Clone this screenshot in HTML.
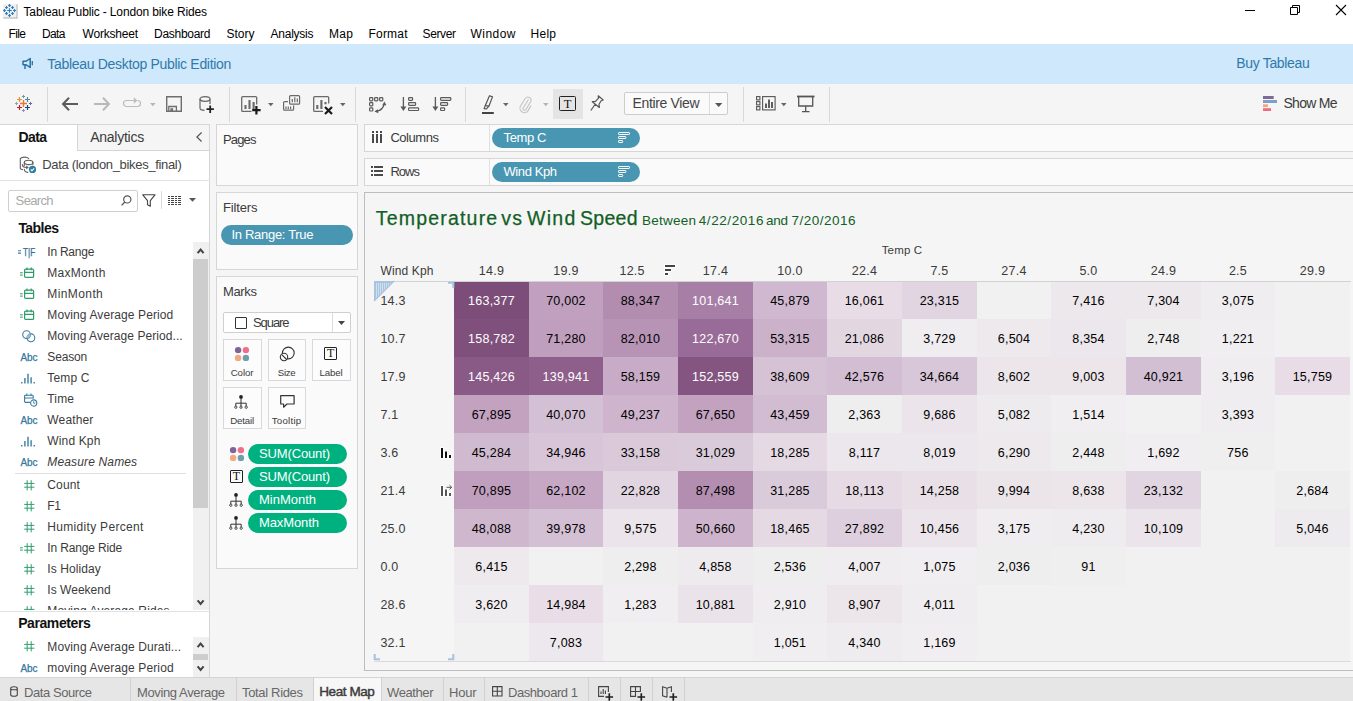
<!DOCTYPE html>
<html><head><meta charset="utf-8"><title>Tableau Public - London bike Rides</title>
<style>
html,body{margin:0;padding:0;}
body{width:1353px;height:701px;position:relative;overflow:hidden;background:#f5f5f5;font-family:"Liberation Sans",sans-serif;}
.b{position:absolute;box-sizing:border-box;}
.t{position:absolute;height:20px;line-height:20px;white-space:nowrap;}
svg{overflow:visible;}
.ttl{-webkit-text-stroke:0.25px currentColor;}
.sb{-webkit-text-stroke:0.25px currentColor;}
.sb2{-webkit-text-stroke:0.45px currentColor;}
</style></head><body>
<div class="b" style="left:0px;top:0px;width:1353px;height:44px;background:#fff;"></div>
<svg class="b" style="left:3px;top:4px;" width="15" height="15" viewBox="0 0 15 15"><rect x="0" y="0" width="13.5" height="13.5" fill="#f0f0f0"/><path d="M14 0.3v14M0.3 14h14" stroke="#adadad" stroke-width="1" fill="none"/><path d="M6.5 4.2v4.6M4.2 6.5h4.6" stroke="#2e7fb8" stroke-width="1.1" fill="none"/><path d="M6.5 0.1v2.8M5.1 1.5h2.8 M6.5 10.1v2.8M5.1 11.5h2.8 M1.5 5.1v2.8M0.1 6.5h2.8 M11.5 5.1v2.8M10.1 6.5h2.8 M3.5 2.1v2.8M2.1 3.5h2.8 M9.5 2.1v2.8M8.1 3.5h2.8 M3.5 8.1v2.8M2.1 9.5h2.8 M9.5 8.1v2.8M8.1 9.5h2.8" stroke="#2e7fb8" stroke-width="1.2" fill="none"/></svg>
<div class="t " style="top:2px;height:20px;line-height:20px;font-size:12px;color:#000;letter-spacing:-0.140px;left:23.50px;">Tableau Public - London bike Rides</div>
<svg class="b" style="left:1244px;top:4px;" width="110" height="14" viewBox="0 0 110 14"><g stroke="#000" stroke-width="1" fill="none"><path d="M1 6.5h10"/>
<path d="M46.5 3.5h7v7h-7zM48.5 3.5v-2h7v7h-2"/>
<path d="M92 1l10 10M102 1l-10 10" stroke-width="1.1"/></g></svg>
<div class="t " style="top:24px;height:20px;line-height:20px;font-size:12px;color:#000;letter-spacing:-0.611px;left:8.50px;">File</div>
<div class="t " style="top:24px;height:20px;line-height:20px;font-size:12px;color:#000;letter-spacing:-0.616px;left:42.00px;">Data</div>
<div class="t " style="top:24px;height:20px;line-height:20px;font-size:12px;color:#000;letter-spacing:-0.204px;left:82.50px;">Worksheet</div>
<div class="t " style="top:24px;height:20px;line-height:20px;font-size:12px;color:#000;letter-spacing:-0.275px;left:154.00px;">Dashboard</div>
<div class="t " style="top:24px;height:20px;line-height:20px;font-size:12px;color:#000;letter-spacing:-0.002px;left:226.50px;">Story</div>
<div class="t " style="top:24px;height:20px;line-height:20px;font-size:12px;color:#000;letter-spacing:-0.240px;left:270.50px;">Analysis</div>
<div class="t " style="top:24px;height:20px;line-height:20px;font-size:12px;color:#000;letter-spacing:0.328px;left:329.00px;">Map</div>
<div class="t " style="top:24px;height:20px;line-height:20px;font-size:12px;color:#000;letter-spacing:0.199px;left:368.50px;">Format</div>
<div class="t " style="top:24px;height:20px;line-height:20px;font-size:12px;color:#000;letter-spacing:-0.369px;left:422.50px;">Server</div>
<div class="t " style="top:24px;height:20px;line-height:20px;font-size:12px;color:#000;letter-spacing:0.464px;left:470.50px;">Window</div>
<div class="t " style="top:24px;height:20px;line-height:20px;font-size:12px;color:#000;letter-spacing:0.274px;left:530.50px;">Help</div>
<div class="b" style="left:0px;top:44px;width:1353px;height:40px;background:#cfe8fc;"></div>
<svg class="b" style="left:22px;top:57px;" width="13" height="13" viewBox="0 0 13 13"><g fill="none" stroke="#2a72a4" stroke-width="1.5" stroke-linejoin="round"><path d="M1 4.2h3.2l4-2.7v9l-4-2.7H1z"/><path d="M3 8v4" /><path d="M10.3 4v4.2" stroke-width="1.3"/></g></svg>
<div class="t " style="top:53px;height:22px;line-height:22px;font-size:14px;color:#2f7aa9;letter-spacing:-0.310px;left:47.30px;">Tableau Desktop Public Edition</div>
<div class="t " style="top:52px;height:22px;line-height:22px;font-size:14px;color:#2f7aa9;letter-spacing:-0.330px;left:1236.30px;">Buy Tableau</div>
<div class="b" style="left:0px;top:84px;width:1353px;height:40px;background:#f5f5f5;"></div>
<div class="b" style="left:47px;top:87px;width:1px;height:35px;background:#d9d9d9;"></div>
<div class="b" style="left:229px;top:87px;width:1px;height:35px;background:#d9d9d9;"></div>
<div class="b" style="left:355px;top:87px;width:1px;height:35px;background:#d9d9d9;"></div>
<div class="b" style="left:465px;top:87px;width:1px;height:35px;background:#d9d9d9;"></div>
<div class="b" style="left:743px;top:87px;width:1px;height:35px;background:#d9d9d9;"></div>
<div class="b" style="left:829px;top:87px;width:1px;height:35px;background:#d9d9d9;"></div>
<svg class="b" style="left:15px;top:95px;" width="17" height="17" viewBox="0 0 17 17"><path d="M8.5 5v7M5 8.5h7" stroke="#e8762c" stroke-width="1.4"/><path d="M4.5 2v5M2 4.5h5" stroke="#eb912c" stroke-width="1.2"/><path d="M12.5 2v5M10 4.5h5" stroke="#59879b" stroke-width="1.2"/><path d="M4.5 10v5M2 12.5h5" stroke="#c72035" stroke-width="1.2"/><path d="M12.5 10v5M10 12.5h5" stroke="#1f447e" stroke-width="1.2"/><path d="M8.5 -0.1v3.2M6.9 1.5h3.2" stroke="#6a9aad" stroke-width="1"/><path d="M8.5 13.9v3.2M6.9 15.5h3.2" stroke="#8a8fbd" stroke-width="1"/><path d="M1.5 6.9v3.2M-0.1 8.5h3.2" stroke="#7aa9b8" stroke-width="1"/><path d="M15.5 6.9v3.2M13.9 8.5h3.2" stroke="#6a6a9e" stroke-width="1"/></svg>
<svg class="b" style="left:62px;top:97px;" width="16" height="14" viewBox="0 0 16 14"><path d="M7 0.8L1 7l6 6.2M1.2 7H16" fill="none" stroke="#5c5c5c" stroke-width="2"/></svg>
<svg class="b" style="left:94px;top:97px;" width="16" height="14" viewBox="0 0 16 14"><path d="M9 0.8L15 7l-6 6.2M14.8 7H0" fill="none" stroke="#b9b9b9" stroke-width="2"/></svg>
<svg class="b" style="left:123px;top:97px;" width="18" height="10" viewBox="0 0 18 10"><path d="M14.5 3.5a3 3 0 0 1 0 6H3.5a3 3 0 0 1 0-6H11" fill="none" stroke="#bdbdbd" stroke-width="1.2"/><path d="M10.8 0.3l3.6 3.2-3.6 3.2z" fill="#bdbdbd"/></svg>
<svg class="b" style="left:149.6px;top:102.9px;" width="5.6" height="3.2" viewBox="0 0 5.6 3.2"><path d="M0 0h5.6L2.8 3.2z" fill="#b5b5b5"/></svg>
<svg class="b" style="left:166px;top:96px;" width="16" height="16" viewBox="0 0 16 16"><path d="M0.7 0.7h14.6v14.6H0.7z" fill="none" stroke="#6e6e6e" stroke-width="1.4"/><path d="M2.8 15V10.5h7.6V15" fill="none" stroke="#6e6e6e" stroke-width="1.3"/><rect x="4.4" y="12.2" width="2.7" height="3" fill="#6e6e6e"/></svg>
<svg class="b" style="left:198.5px;top:96.3px;" width="16" height="18" viewBox="0 0 16 18"><g fill="none" stroke="#666" stroke-width="1.2"><ellipse cx="6" cy="3" rx="5" ry="2.3"/><path d="M1 3v9c0 1.2 2 2.3 4.6 2.3M11 3v5"/></g><path d="M11.2 9.5v7.4M7.5 13.2h7.4" stroke="#222" stroke-width="1.8"/></svg>
<svg class="b" style="left:240.5px;top:96px;" width="20" height="19" viewBox="0 0 20 19"><path d="M15.7 8.5V1.7a1 1 0 0 0-1-1H1.7a1 1 0 0 0-1 1v12.7a1 1 0 0 0 1 1H10.5" fill="none" stroke="#6a6a6a" stroke-width="1.3"/><path d="M4.5 13V9M8.5 13V4M12.6 13V6" stroke="#6a6a6a" stroke-width="2.1"/><path d="M15.4 10v8.4M11.2 14.2h8.4" stroke="#1a1a1a" stroke-width="2.2"/></svg>
<svg class="b" style="left:267.6px;top:102.9px;" width="5.6" height="3.2" viewBox="0 0 5.6 3.2"><path d="M0 0h5.6L2.8 3.2z" fill="#666"/></svg>
<svg class="b" style="left:283px;top:95px;" width="18" height="17" viewBox="0 0 18 17"><g fill="none" stroke="#6a6a6a" stroke-width="1.2"><rect x="6.6" y="0.6" width="10" height="8.6" rx="1"/><path d="M5 6.6H1.6a1 1 0 0 0-1 1v6.6a1 1 0 0 0 1 1h8a1 1 0 0 0 1-1V10.6"/></g><path d="M9.3 7.3V4M11.8 7.3V2.3M14.3 7.3V3.6M3 14v-2.6M5.3 14v-2.6M7.6 14v-2.6" stroke="#6a6a6a" stroke-width="1.2"/></svg>
<svg class="b" style="left:312.6px;top:96px;" width="20" height="19" viewBox="0 0 20 19"><path d="M15.7 7.5V1.7a1 1 0 0 0-1-1H1.7a1 1 0 0 0-1 1v12.7a1 1 0 0 0 1 1H10" fill="none" stroke="#6a6a6a" stroke-width="1.3"/><path d="M4.3 13V9M8.4 13V4M12.5 8.3V6" stroke="#6a6a6a" stroke-width="2.1"/><path d="M12 11l7 7M19 11l-7 7" stroke="#1a1a1a" stroke-width="2.2"/></svg>
<svg class="b" style="left:339.7px;top:102.9px;" width="5.6" height="3.2" viewBox="0 0 5.6 3.2"><path d="M0 0h5.6L2.8 3.2z" fill="#666"/></svg>
<svg class="b" style="left:369px;top:97px;" width="17" height="16" viewBox="0 0 17 16"><g fill="none" stroke="#5a5a5a" stroke-width="1.2"><rect x="0.6" y="0.6" width="3.2" height="3.2" rx="0.8"/><rect x="5.6" y="0.6" width="3.2" height="3.2" rx="0.8"/><rect x="10.6" y="0.6" width="3.2" height="3.2" rx="0.8"/><rect x="0.6" y="5.7" width="3.2" height="3.2" rx="0.8"/><rect x="0.6" y="10.8" width="3.2" height="3.2" rx="0.8"/><path d="M15 7.5c-0.8 3.6-3.6 6-7.4 6.8" stroke-width="1.3"/></g><path d="M15.4 4.6l2 3.6h-4.2zM5.4 14.6l3.4-2.3 0.6 4z" fill="#5a5a5a"/></svg>
<svg class="b" style="left:400px;top:97px;" width="20" height="15" viewBox="0 0 20 15"><path d="M3.4 0v11" stroke="#5a5a5a" stroke-width="1.3" fill="none"/><path d="M0.4 9.6h6L3.4 14z" fill="#5a5a5a"/><g fill="none" stroke="#5a5a5a" stroke-width="1.2"><rect x="8.6" y="0.6" width="4" height="2.7" rx="0.8"/><rect x="8.6" y="5.7" width="7" height="2.7" rx="0.8"/><rect x="8.6" y="10.8" width="10" height="2.7" rx="0.8"/></g></svg>
<svg class="b" style="left:432px;top:97px;" width="20" height="15" viewBox="0 0 20 15"><path d="M3.4 0v11" stroke="#5a5a5a" stroke-width="1.3" fill="none"/><path d="M0.4 9.6h6L3.4 14z" fill="#5a5a5a"/><g fill="none" stroke="#5a5a5a" stroke-width="1.2"><rect x="8.6" y="0.6" width="10.2" height="2.7" rx="0.8"/><rect x="8.6" y="5.7" width="7" height="2.7" rx="0.8"/><rect x="8.6" y="10.8" width="4" height="2.7" rx="0.8"/></g></svg>
<svg class="b" style="left:482px;top:95px;" width="12" height="19" viewBox="0 0 12 19"><g fill="none" stroke="#555" stroke-width="1.2" stroke-linejoin="round"><path d="M7.5 0.7l3 1.2-3.6 9.3-3.6-0.6z"/><path d="M3.3 10.6l-1.2 3 2.4 0.2 2.4-2.6"/></g><path d="M0 18h11.8" stroke="#444" stroke-width="2"/></svg>
<svg class="b" style="left:502.5px;top:102.9px;" width="5.6" height="3.2" viewBox="0 0 5.6 3.2"><path d="M0 0h5.6L2.8 3.2z" fill="#666"/></svg>
<svg class="b" style="left:519px;top:95px;" width="13" height="19" viewBox="0 0 13 19"><path d="M9.5 4.5L4 13.2a1.6 1.6 0 0 0 2.7 1.6L11.5 7A3.2 3.2 0 0 0 6 3.7L1.6 11a4.4 4.4 0 0 0 7.5 4.6l3-5" fill="none" stroke="#c6c6c6" stroke-width="1.2"/></svg>
<svg class="b" style="left:542.7px;top:102.9px;" width="5.6" height="3.2" viewBox="0 0 5.6 3.2"><path d="M0 0h5.6L2.8 3.2z" fill="#b5b5b5"/></svg>
<div class="b" style="left:553px;top:88.5px;width:30px;height:30px;background:#e4e4e4;"></div>
<div class="b" style="left:559px;top:96px;width:17px;height:15px;border:1px solid #222;border-width:1.4px;border-radius:1.5px;"></div>
<div class="t" style="left:559px;top:93.5px;width:17px;height:20px;line-height:20px;text-align:center;font-family:'Liberation Serif',serif;font-size:12.5px;color:#111;">T</div>
<svg class="b" style="left:590px;top:95px;" width="14" height="17" viewBox="0 0 14 17"><path d="M8.2 0.8l5 4.2-2 0.7-2.2 3.6 0.3 3.2-7-5.8 3.2-0.4 3-3.2zM5 9.5L0.8 15.5" fill="none" stroke="#555" stroke-width="1.2" stroke-linejoin="round"/></svg>
<div class="b" style="left:624px;top:92px;width:104px;height:23px;background:#fafafa;border:1px solid #cdcdcd;border-radius:2px;"></div>
<div class="b" style="left:709px;top:93px;width:1px;height:21px;background:#dcdcdc;"></div>
<div class="t " style="top:92px;height:22px;line-height:22px;font-size:14px;color:#444;letter-spacing:-0.355px;left:632.50px;">Entire View</div>
<svg class="b" style="left:714.6px;top:102.5px;" width="7.4" height="4" viewBox="0 0 7.4 4"><path d="M0 0h7.4L3.7 4z" fill="#555"/></svg>
<svg class="b" style="left:755.5px;top:96px;" width="20" height="15" viewBox="0 0 20 15"><g fill="none" stroke="#555" stroke-width="1.1"><rect x="0.6" y="0.6" width="3.3" height="3.3"/><rect x="0.6" y="5.6" width="3.3" height="3.3"/><rect x="0.6" y="10.6" width="3.3" height="3.3"/><rect x="6.6" y="0.6" width="12.5" height="13.3"/></g><path d="M10 12V7.5M13 12V3.5M16 12V6" stroke="#444" stroke-width="1.7"/></svg>
<svg class="b" style="left:780.7px;top:102.9px;" width="5.6" height="3.2" viewBox="0 0 5.6 3.2"><path d="M0 0h5.6L2.8 3.2z" fill="#666"/></svg>
<svg class="b" style="left:796.5px;top:95px;" width="18" height="18" viewBox="0 0 18 18"><g fill="none" stroke="#555" stroke-width="1.3"><path d="M0 1.5h17.5" stroke-width="1.8"/><path d="M1.7 2v9h14V2"/><path d="M8.7 11v5M5 16.6h7.5"/></g></svg>
<svg class="b" style="left:1263px;top:96px;" width="15" height="15" viewBox="0 0 15 15"><rect x="0" y="0" width="10.7" height="3" fill="#7b6a9b"/><rect x="0" y="4" width="14" height="3" fill="#7f9fc6"/><rect x="0" y="8.3" width="5" height="2.8" fill="#f2a77f"/><rect x="0" y="12.2" width="8" height="2.8" fill="#ee6b80"/></svg>
<div class="t " style="top:92px;height:22px;line-height:22px;font-size:14px;color:#3b3b3b;letter-spacing:-0.726px;left:1283.50px;">Show Me</div>
<div class="b" style="left:0px;top:124px;width:210px;height:553px;background:#fff;border-right:1px solid #d6d6d6;border-top:1px solid #d6d6d6;"></div>
<div class="b" style="left:77px;top:124px;width:133px;height:27px;background:#f5f5f5;border:1px solid #d6d6d6;"></div>
<div class="t " style="top:126px;height:22px;line-height:22px;font-size:14px;color:#111;letter-spacing:-0.548px;font-weight:bold;left:18.40px;">Data</div>
<div class="t " style="top:126px;height:22px;line-height:22px;font-size:14px;color:#3b3b3b;letter-spacing:-0.253px;left:90.20px;">Analytics</div>
<svg class="b" style="left:195.5px;top:131.5px;" width="7" height="10" viewBox="0 0 7 10"><path d="M5.6 0.5L0.9 5l4.7 4.5" fill="none" stroke="#555" stroke-width="1.2"/></svg>
<svg class="b" style="left:19px;top:156px;" width="18" height="18" viewBox="0 0 18 18"><g fill="none" stroke="#606060" stroke-width="1.1" stroke-linecap="round"><path d="M9.7 2.5C9 1.6 7.2 1.1 5.5 1.1 3 1.1 1.3 2 1.3 3v9.4c0 0.6 0.9 1 2.2 1.2"/><ellipse cx="9.6" cy="6.4" rx="4.3" ry="2.2"/><path d="M5.3 6.4v3M13.9 6.4v2.4M3.3 8.5c0 2 1.2 3 4.4 3M5.3 13.3c0 1.7 1.2 2.7 3.5 3.1"/></g><path d="M7.2 9.6l2.6 1.9-2.6 1.9z" fill="#606060"/>
<circle cx="13.5" cy="13.4" r="3.6" fill="#2f7ea1"/><path d="M11.7 13.5l1.3 1.3 2.2-2.5" fill="none" stroke="#fff" stroke-width="1.1"/></svg>
<div class="t " style="top:154px;height:21px;line-height:21px;font-size:13px;color:#444;letter-spacing:-0.334px;left:42.30px;">Data (london_bikes_final)</div>
<div class="b" style="left:0px;top:180px;width:210px;height:1px;background:#e3e3e3;"></div>
<div class="b" style="left:8px;top:189.5px;width:130px;height:22px;background:#fff;border:1px solid #cfcfcf;border-radius:2px;"></div>
<div class="t " style="top:190px;height:21px;line-height:21px;font-size:13px;color:#a9a9a9;letter-spacing:-0.638px;left:15.60px;">Search</div>
<svg class="b" style="left:120.5px;top:195px;" width="11" height="11" viewBox="0 0 11 11"><circle cx="6.3" cy="4.4" r="3.6" fill="none" stroke="#555" stroke-width="1.2"/><path d="M3.8 7L0.6 10.4" stroke="#555" stroke-width="1.3"/></svg>
<svg class="b" style="left:142px;top:194px;" width="14" height="14" viewBox="0 0 14 14"><path d="M0.8 0.8h12.2L8.3 6.6v5.6l-2.8-1.5V6.6z" fill="none" stroke="#444" stroke-width="1.1" stroke-linejoin="round"/></svg>
<div class="b" style="left:161px;top:191px;width:1px;height:18px;background:#d9d9d9;"></div>
<svg class="b" style="left:168px;top:196px;" width="13" height="9" viewBox="0 0 13 9"><path d="M0 0.5h2.3M3.4 0.5h2.3M6.8 0.5h2.3M10.2 0.5h2.3M0 2.5h2.3M3.4 2.5h2.3M6.8 2.5h2.3M10.2 2.5h2.3M0 4.5h2.3M3.4 4.5h2.3M6.8 4.5h2.3M10.2 4.5h2.3M0 6.5h2.3M3.4 6.5h2.3M6.8 6.5h2.3M10.2 6.5h2.3M0 8.5h2.3M3.4 8.5h2.3M6.8 8.5h2.3M10.2 8.5h2.3" stroke="#444" stroke-width="1" shape-rendering="crispEdges"/></svg>
<svg class="b" style="left:189px;top:198.4px;" width="7" height="3.8" viewBox="0 0 7 3.8"><path d="M0 0h7L3.5 3.8z" fill="#555"/></svg>
<div class="t " style="top:217px;height:22px;line-height:22px;font-size:14px;color:#111;letter-spacing:-0.542px;font-weight:bold;left:18.40px;">Tables</div>
<svg class="b" style="left:18px;top:250.3px;" width="4" height="4" viewBox="0 0 4 4"><path d="M0 0.8h3M0 3.1h3" stroke="#3a7ea1" stroke-width="1.1"/></svg>
<div class="t sb" style="top:243px;height:18px;line-height:18px;font-size:10.5px;color:#356f94;transform:scaleX(0.78);transform-origin:0 0;left:22.60px;">T|F</div>
<div class="t " style="top:242px;height:20px;line-height:20px;font-size:12px;color:#3b3b3b;letter-spacing:-0.243px;left:47.30px;">In Range</div>
<svg class="b" style="left:24px;top:267px;" width="11" height="12" viewBox="0 0 11 12"><g fill="none" stroke="#2f9c6e" stroke-width="1.2"><rect x="0.6" y="2.2" width="9" height="8.2" rx="1"/><path d="M0.6 5.4h9M3 0.6v2.6M7.2 0.6v2.6"/></g></svg>
<svg class="b" style="left:20px;top:271.8px;" width="4" height="4" viewBox="0 0 4 4"><path d="M0 0.8h2.8M0 3.1h2.8" stroke="#2f9c6e" stroke-width="1"/></svg>
<div class="t " style="top:263px;height:20px;line-height:20px;font-size:12px;color:#3b3b3b;letter-spacing:0.283px;left:47.30px;">MaxMonth</div>
<svg class="b" style="left:24px;top:288px;" width="11" height="12" viewBox="0 0 11 12"><g fill="none" stroke="#2f9c6e" stroke-width="1.2"><rect x="0.6" y="2.2" width="9" height="8.2" rx="1"/><path d="M0.6 5.4h9M3 0.6v2.6M7.2 0.6v2.6"/></g></svg>
<svg class="b" style="left:20px;top:292.8px;" width="4" height="4" viewBox="0 0 4 4"><path d="M0 0.8h2.8M0 3.1h2.8" stroke="#2f9c6e" stroke-width="1"/></svg>
<div class="t " style="top:284px;height:20px;line-height:20px;font-size:12px;color:#3b3b3b;letter-spacing:0.402px;left:47.30px;">MinMonth</div>
<svg class="b" style="left:24px;top:309px;" width="11" height="12" viewBox="0 0 11 12"><g fill="none" stroke="#2f9c6e" stroke-width="1.2"><rect x="0.6" y="2.2" width="9" height="8.2" rx="1"/><path d="M0.6 5.4h9M3 0.6v2.6M7.2 0.6v2.6"/></g></svg>
<svg class="b" style="left:20px;top:313.8px;" width="4" height="4" viewBox="0 0 4 4"><path d="M0 0.8h2.8M0 3.1h2.8" stroke="#2f9c6e" stroke-width="1"/></svg>
<div class="t " style="top:305px;height:20px;line-height:20px;font-size:12px;color:#3b3b3b;letter-spacing:0.107px;left:47.30px;">Moving Average Period</div>
<svg class="b" style="left:22px;top:330px;" width="14" height="13" viewBox="0 0 14 13"><g fill="none" stroke="#3a7ea1" stroke-width="1.1"><circle cx="4.6" cy="4.6" r="3.9"/><circle cx="8.9" cy="7.8" r="3.9"/></g><path d="M5.4 7.6a3.9 3.9 0 0 1 2.7-3.6 3.9 3.9 0 0 1-2.7 3.6z" fill="#9dbccb" stroke="#9dbccb" stroke-width="1.2"/></svg>
<div class="t " style="top:326px;height:20px;line-height:20px;font-size:12px;color:#3b3b3b;letter-spacing:0.067px;left:47.30px;">Moving Average Period...</div>
<div class="t sb" style="top:349px;height:17px;line-height:17px;font-size:10px;color:#33769b;letter-spacing:-0.216px;left:20.60px;">Abc</div>
<div class="t " style="top:347px;height:20px;line-height:20px;font-size:12px;color:#3b3b3b;letter-spacing:-0.140px;left:47.30px;">Season</div>
<svg class="b" style="left:21.3px;top:373px;" width="15" height="11" viewBox="0 0 15 11"><path d="M0.8 9.1v1.5M3.9 5v5.6M7 0.8v9.8M10.1 4.2v6.4M13.2 9.1v1.5" stroke="#3a7ea1" stroke-width="1.4"/></svg>
<div class="t " style="top:368px;height:20px;line-height:20px;font-size:12px;color:#3b3b3b;letter-spacing:0.165px;left:47.30px;">Temp C</div>
<svg class="b" style="left:24px;top:392.5px;" width="14" height="14" viewBox="0 0 14 14"><g fill="none" stroke="#3a7ea1" stroke-width="1.1"><path d="M6 9.4H1.4a0.8 0.8 0 0 1-0.8-0.8V3a0.8 0.8 0 0 1 0.8-0.8h7a0.8 0.8 0 0 1 0.8 0.8v2.6"/><path d="M0.6 5h8.6M2.8 0.4v2.6M7 0.4v2.6"/><circle cx="9.7" cy="10" r="3.1"/><path d="M9.7 8.2v2h1.6" stroke-width="0.9"/></g></svg>
<div class="t " style="top:389px;height:20px;line-height:20px;font-size:12px;color:#3b3b3b;letter-spacing:0.175px;left:47.30px;">Time</div>
<div class="t sb" style="top:412px;height:17px;line-height:17px;font-size:10px;color:#33769b;letter-spacing:-0.216px;left:20.60px;">Abc</div>
<div class="t " style="top:410px;height:20px;line-height:20px;font-size:12px;color:#3b3b3b;letter-spacing:0.150px;left:47.30px;">Weather</div>
<svg class="b" style="left:21.3px;top:436px;" width="15" height="11" viewBox="0 0 15 11"><path d="M0.8 9.1v1.5M3.9 5v5.6M7 0.8v9.8M10.1 4.2v6.4M13.2 9.1v1.5" stroke="#3a7ea1" stroke-width="1.4"/></svg>
<div class="t " style="top:431px;height:20px;line-height:20px;font-size:12px;color:#3b3b3b;letter-spacing:0.149px;left:47.30px;">Wind Kph</div>
<div class="t sb" style="top:454px;height:17px;line-height:17px;font-size:10px;color:#33769b;letter-spacing:-0.216px;left:20.60px;">Abc</div>
<div class="t " style="top:452px;height:20px;line-height:20px;font-size:12px;color:#3b3b3b;letter-spacing:0.147px;font-style:italic;left:47.30px;">Measure Names</div>
<div class="b" style="left:15px;top:473px;width:171px;height:1px;background:#e0e0e0;"></div>
<div class="b" style="left:0;top:0;width:210px;height:610px;overflow:hidden;">
<svg class="b" style="left:23.8px;top:479.7px;" width="10.6" height="10.6" viewBox="0 0 10.6 10.6"><path d="M3.2 0.2v10.2M7.2 0.2v10.2M0.2 3.4h10.2M0.2 7.2h10.2" stroke="#2f9c6e" stroke-width="1"/></svg>
<div class="t " style="top:475px;height:20px;line-height:20px;font-size:12px;color:#3b3b3b;letter-spacing:0.160px;left:47.30px;">Count</div>
<svg class="b" style="left:23.8px;top:500.7px;" width="10.6" height="10.6" viewBox="0 0 10.6 10.6"><path d="M3.2 0.2v10.2M7.2 0.2v10.2M0.2 3.4h10.2M0.2 7.2h10.2" stroke="#2f9c6e" stroke-width="1"/></svg>
<div class="t " style="top:496px;height:20px;line-height:20px;font-size:12px;color:#3b3b3b;letter-spacing:-0.403px;left:47.30px;">F1</div>
<svg class="b" style="left:23.8px;top:521.7px;" width="10.6" height="10.6" viewBox="0 0 10.6 10.6"><path d="M3.2 0.2v10.2M7.2 0.2v10.2M0.2 3.4h10.2M0.2 7.2h10.2" stroke="#2f9c6e" stroke-width="1"/></svg>
<div class="t " style="top:517px;height:20px;line-height:20px;font-size:12px;color:#3b3b3b;letter-spacing:0.309px;left:47.30px;">Humidity Percent</div>
<svg class="b" style="left:23.8px;top:542.7px;" width="10.6" height="10.6" viewBox="0 0 10.6 10.6"><path d="M3.2 0.2v10.2M7.2 0.2v10.2M0.2 3.4h10.2M0.2 7.2h10.2" stroke="#2f9c6e" stroke-width="1"/></svg>
<svg class="b" style="left:20px;top:546.5px;" width="4" height="4" viewBox="0 0 4 4"><path d="M0 0.8h2.8M0 3.1h2.8" stroke="#2f9c6e" stroke-width="1"/></svg>
<div class="t " style="top:538px;height:20px;line-height:20px;font-size:12px;color:#3b3b3b;letter-spacing:-0.143px;left:47.30px;">In Range Ride</div>
<svg class="b" style="left:23.8px;top:563.7px;" width="10.6" height="10.6" viewBox="0 0 10.6 10.6"><path d="M3.2 0.2v10.2M7.2 0.2v10.2M0.2 3.4h10.2M0.2 7.2h10.2" stroke="#2f9c6e" stroke-width="1"/></svg>
<div class="t " style="top:559px;height:20px;line-height:20px;font-size:12px;color:#3b3b3b;letter-spacing:0.079px;left:47.30px;">Is Holiday</div>
<svg class="b" style="left:23.8px;top:584.7px;" width="10.6" height="10.6" viewBox="0 0 10.6 10.6"><path d="M3.2 0.2v10.2M7.2 0.2v10.2M0.2 3.4h10.2M0.2 7.2h10.2" stroke="#2f9c6e" stroke-width="1"/></svg>
<div class="t " style="top:580px;height:20px;line-height:20px;font-size:12px;color:#3b3b3b;letter-spacing:0.028px;left:47.30px;">Is Weekend</div>
<svg class="b" style="left:23.8px;top:605.7px;" width="10.6" height="10.6" viewBox="0 0 10.6 10.6"><path d="M3.2 0.2v10.2M7.2 0.2v10.2M0.2 3.4h10.2M0.2 7.2h10.2" stroke="#2f9c6e" stroke-width="1"/></svg>
<div class="t " style="top:601px;height:20px;line-height:20px;font-size:12px;color:#3b3b3b;letter-spacing:0.126px;left:47.30px;">Moving Average Rides</div>
</div>
<div class="b" style="left:0px;top:611px;width:209px;height:1px;background:#e3e3e3;"></div>
<div class="t " style="top:612px;height:22px;line-height:22px;font-size:14px;color:#111;letter-spacing:-0.419px;font-weight:bold;left:18.20px;">Parameters</div>
<svg class="b" style="left:23.8px;top:641.3px;" width="10.6" height="10.6" viewBox="0 0 10.6 10.6"><path d="M3.2 0.2v10.2M7.2 0.2v10.2M0.2 3.4h10.2M0.2 7.2h10.2" stroke="#2f9c6e" stroke-width="1"/></svg>
<div class="t " style="top:637px;height:20px;line-height:20px;font-size:12px;color:#3b3b3b;letter-spacing:0.114px;left:47.30px;">Moving Average Durati...</div>
<div class="t sb" style="top:660px;height:17px;line-height:17px;font-size:10px;color:#33769b;letter-spacing:-0.216px;left:20.60px;">Abc</div>
<div class="t " style="top:658px;height:20px;line-height:20px;font-size:12px;color:#3b3b3b;letter-spacing:0.124px;left:47.30px;">moving Average Period</div>
<div class="b" style="left:193px;top:242px;width:16px;height:368px;background:#f0f0f0;"></div>
<div class="b" style="left:193px;top:259px;width:15px;height:249px;background:#cdcdcd;"></div>
<svg class="b" style="left:196px;top:246.6px;" width="10" height="8" viewBox="0 0 10 8"><path d="M1.6 6.2L4.6 2.6l3 3.6" fill="none" stroke="#444" stroke-width="2" stroke-linejoin="miter"/></svg>
<svg class="b" style="left:196px;top:598.6px;" width="10" height="8" viewBox="0 0 10 8"><path d="M1.6 1.4L4.6 5l3-3.6" fill="none" stroke="#444" stroke-width="2" stroke-linejoin="miter"/></svg>
<div class="b" style="left:193px;top:637px;width:16px;height:40px;background:#f0f0f0;"></div>
<div class="b" style="left:193px;top:654px;width:15px;height:6px;background:#cdcdcd;"></div>
<svg class="b" style="left:196px;top:641.2px;" width="10" height="8" viewBox="0 0 10 8"><path d="M1.6 6.2L4.6 2.6l3 3.6" fill="none" stroke="#444" stroke-width="2" stroke-linejoin="miter"/></svg>
<svg class="b" style="left:196px;top:665.2px;" width="10" height="8" viewBox="0 0 10 8"><path d="M1.6 1.4L4.6 5l3-3.6" fill="none" stroke="#444" stroke-width="2" stroke-linejoin="miter"/></svg>
<div class="b" style="left:216px;top:124px;width:142px;height:62px;background:#fafafa;border:1px solid #d6d6d6;"></div>
<div class="t " style="top:129px;height:21px;line-height:21px;font-size:13px;color:#3b3b3b;letter-spacing:-0.840px;left:223.00px;">Pages</div>
<div class="b" style="left:216px;top:192px;width:142px;height:78px;background:#fafafa;border:1px solid #d6d6d6;"></div>
<div class="t " style="top:197px;height:21px;line-height:21px;font-size:13px;color:#3b3b3b;letter-spacing:-0.148px;left:223.00px;">Filters</div>
<div class="b" style="left:221px;top:225px;width:132px;height:20px;background:#4996b2;border-radius:10px;"></div>
<div class="t " style="top:224px;height:21px;line-height:21px;font-size:13px;color:#fff;letter-spacing:-0.308px;left:231.50px;">In Range: True</div>
<div class="b" style="left:216px;top:276px;width:142px;height:293px;background:#fafafa;border:1px solid #d6d6d6;"></div>
<div class="t " style="top:281px;height:21px;line-height:21px;font-size:13px;color:#3b3b3b;letter-spacing:-0.347px;left:223.00px;">Marks</div>
<div class="b" style="left:223px;top:312px;width:128px;height:21px;background:#fff;border:1px solid #cfcfcf;border-radius:2px;"></div>
<div class="b" style="left:332px;top:313px;width:1px;height:19px;background:#dcdcdc;"></div>
<div class="b" style="left:235px;top:317px;width:12px;height:11.5px;border:1px solid #333;border-width:1.2px;border-radius:1px;"></div>
<div class="t " style="top:312px;height:21px;line-height:21px;font-size:13px;color:#3b3b3b;letter-spacing:-1.084px;left:253.00px;">Square</div>
<svg class="b" style="left:338px;top:321px;" width="7" height="4" viewBox="0 0 7 4"><path d="M0 0h7L3.5 4z" fill="#444"/></svg>
<div class="b" style="left:223px;top:339px;width:39px;height:42px;background:#fcfcfc;border:1px solid #d9d9d9;"></div>
<div class="t " style="top:364px;height:17px;line-height:17px;font-size:9.7px;color:#3b3b3b;letter-spacing:-0.045px;left:142.10px;width:200px;text-align:center;">Color</div>
<svg class="b" style="left:235.1px;top:346.9px;" width="14" height="14" viewBox="0 0 14 14"><circle cx="3.1" cy="3.1" r="3.2" fill="#7d6599"/><circle cx="10.9" cy="3.1" r="3.2" fill="#ee6f87"/><circle cx="3.1" cy="10.9" r="3.2" fill="#f2a980"/><circle cx="10.9" cy="10.9" r="3.2" fill="#6f9fad"/></svg>
<div class="b" style="left:268px;top:339px;width:38px;height:42px;background:#fcfcfc;border:1px solid #d9d9d9;"></div>
<div class="t " style="top:364px;height:17px;line-height:17px;font-size:9.7px;color:#3b3b3b;letter-spacing:-0.290px;left:186.60px;width:200px;text-align:center;">Size</div>
<svg class="b" style="left:280px;top:346px;" width="15" height="15" viewBox="0 0 15 15"><g fill="none" stroke="#333" stroke-width="1.1"><circle cx="8.3" cy="7" r="5.9"/><circle cx="4" cy="11" r="3.7" fill="#fcfcfc"/><path d="M1.5 8.4l5.1 5.1"/></g></svg>
<div class="b" style="left:312px;top:339px;width:39px;height:42px;background:#fcfcfc;border:1px solid #d9d9d9;"></div>
<div class="t " style="top:364px;height:17px;line-height:17px;font-size:9.7px;color:#3b3b3b;letter-spacing:-0.109px;left:231.10px;width:200px;text-align:center;">Label</div>
<div class="b" style="left:324.1px;top:346.9px;width:13px;height:13px;border:1px solid #222;border-width:1.2px;border-radius:1px;"></div>
<div class="t" style="left:324.1px;top:343.1px;width:13px;text-align:center;font-family:'Liberation Serif',serif;font-size:12px;height:20px;line-height:20px;color:#111;">T</div>
<div class="b" style="left:223px;top:387px;width:39px;height:42px;background:#fcfcfc;border:1px solid #d9d9d9;"></div>
<div class="t " style="top:412px;height:17px;line-height:17px;font-size:9.7px;color:#3b3b3b;letter-spacing:-0.160px;left:142.10px;width:200px;text-align:center;">Detail</div>
<svg class="b" style="left:234.4px;top:395px;" width="14" height="14" viewBox="0 0 14 14"><circle cx="7" cy="1.9" r="1.9" fill="#222"/><path d="M7 3v5.5M1.8 11V8.2h10.4V11" fill="none" stroke="#333" stroke-width="1"/><g fill="#fafafa" stroke="#333" stroke-width="0.9"><circle cx="1.8" cy="12.2" r="1.15"/><circle cx="7" cy="12.2" r="1.15"/><circle cx="12.2" cy="12.2" r="1.15"/></g><path d="M7 8.5V11" stroke="#333" stroke-width="1"/></svg>
<div class="b" style="left:268px;top:387px;width:38px;height:42px;background:#fcfcfc;border:1px solid #d9d9d9;"></div>
<div class="t " style="top:412px;height:17px;line-height:17px;font-size:9.7px;color:#3b3b3b;letter-spacing:0.227px;left:186.60px;width:200px;text-align:center;">Tooltip</div>
<svg class="b" style="left:280px;top:395px;" width="15" height="13" viewBox="0 0 15 13"><path d="M0.7 0.7h13.4v8.3H7L3.6 12.2V9H0.7z" fill="none" stroke="#333" stroke-width="1.2" stroke-linejoin="round"/></svg>
<div class="b" style="left:248px;top:444px;width:99px;height:20px;background:#00b180;border-radius:10px;"></div>
<div class="t " style="top:443px;height:21px;line-height:21px;font-size:13px;color:#fff;letter-spacing:-0.137px;left:259.00px;">SUM(Count)</div>
<svg class="b" style="left:229.5px;top:447px;" width="14" height="14" viewBox="0 0 14 14"><circle cx="3.1" cy="3.1" r="3.2" fill="#7d6599"/><circle cx="10.9" cy="3.1" r="3.2" fill="#ee6f87"/><circle cx="3.1" cy="10.9" r="3.2" fill="#f2a980"/><circle cx="10.9" cy="10.9" r="3.2" fill="#6f9fad"/></svg>
<div class="b" style="left:248px;top:467px;width:99px;height:20px;background:#00b180;border-radius:10px;"></div>
<div class="t " style="top:466px;height:21px;line-height:21px;font-size:13px;color:#fff;letter-spacing:-0.137px;left:259.00px;">SUM(Count)</div>
<div class="b" style="left:230px;top:469.8px;width:13px;height:13px;border:1px solid #222;border-width:1.2px;border-radius:1px;"></div>
<div class="t" style="left:230px;top:466px;width:13px;text-align:center;font-family:'Liberation Serif',serif;font-size:12px;height:20px;line-height:20px;color:#111;">T</div>
<div class="b" style="left:248px;top:490px;width:99px;height:20px;background:#00b180;border-radius:10px;"></div>
<div class="t " style="top:489px;height:21px;line-height:21px;font-size:13px;color:#fff;letter-spacing:-0.011px;left:259.00px;">MinMonth</div>
<svg class="b" style="left:229.1px;top:493px;" width="14" height="14" viewBox="0 0 14 14"><circle cx="7" cy="1.9" r="1.9" fill="#222"/><path d="M7 3v5.5M1.8 11V8.2h10.4V11" fill="none" stroke="#333" stroke-width="1"/><g fill="#fafafa" stroke="#333" stroke-width="0.9"><circle cx="1.8" cy="12.2" r="1.15"/><circle cx="7" cy="12.2" r="1.15"/><circle cx="12.2" cy="12.2" r="1.15"/></g><path d="M7 8.5V11" stroke="#333" stroke-width="1"/></svg>
<div class="b" style="left:248px;top:513px;width:99px;height:20px;background:#00b180;border-radius:10px;"></div>
<div class="t " style="top:512px;height:21px;line-height:21px;font-size:13px;color:#fff;letter-spacing:-0.099px;left:259.00px;">MaxMonth</div>
<svg class="b" style="left:229.1px;top:516px;" width="14" height="14" viewBox="0 0 14 14"><circle cx="7" cy="1.9" r="1.9" fill="#222"/><path d="M7 3v5.5M1.8 11V8.2h10.4V11" fill="none" stroke="#333" stroke-width="1"/><g fill="#fafafa" stroke="#333" stroke-width="0.9"><circle cx="1.8" cy="12.2" r="1.15"/><circle cx="7" cy="12.2" r="1.15"/><circle cx="12.2" cy="12.2" r="1.15"/></g><path d="M7 8.5V11" stroke="#333" stroke-width="1"/></svg>
<div class="b" style="left:364px;top:124px;width:1000px;height:28px;background:#fafafa;border:1px solid #d6d6d6;"></div>
<div class="b" style="left:364px;top:158px;width:1000px;height:28px;background:#fafafa;border:1px solid #d6d6d6;"></div>
<div class="b" style="left:489px;top:125px;width:1px;height:26px;background:#e0e0e0;"></div>
<div class="b" style="left:489px;top:159px;width:1px;height:26px;background:#e0e0e0;"></div>
<svg class="b" style="left:372px;top:131px;" width="10" height="12" viewBox="0 0 10 12"><g fill="#4a4a4a" shape-rendering="crispEdges"><rect x="0" y="0" width="2" height="2"/><rect x="4" y="0" width="2" height="2"/><rect x="8" y="0" width="2" height="2"/><rect x="0" y="3" width="2" height="9"/><rect x="4" y="3" width="2" height="9"/><rect x="8" y="3" width="2" height="9"/></g></svg>
<div class="t " style="top:127px;height:21px;line-height:21px;font-size:13px;color:#3b3b3b;letter-spacing:-0.466px;left:390.40px;">Columns</div>
<svg class="b" style="left:371px;top:166px;" width="12" height="10" viewBox="0 0 12 10"><g fill="#4a4a4a" shape-rendering="crispEdges"><rect x="0" y="0" width="2" height="2"/><rect x="0" y="4" width="2" height="2"/><rect x="0" y="8" width="2" height="2"/><rect x="3" y="0" width="9" height="2"/><rect x="3" y="4" width="9" height="2"/><rect x="3" y="8" width="9" height="2"/></g></svg>
<div class="t " style="top:161px;height:21px;line-height:21px;font-size:13px;color:#3b3b3b;letter-spacing:-1.002px;left:390.40px;">Rows</div>
<div class="b" style="left:492px;top:128px;width:148px;height:20px;background:#4996b2;border-radius:10px;"></div>
<div class="t " style="top:127px;height:21px;line-height:21px;font-size:13px;color:#fff;letter-spacing:-0.358px;left:503.50px;">Temp C</div>
<svg class="b" style="left:618px;top:132.3px;" width="13" height="11" viewBox="0 0 13 11"><g fill="none" stroke="#fff" stroke-width="1"><rect x="0.5" y="0.5" width="11" height="2" rx="0.6"/><rect x="0.5" y="4.5" width="7.4" height="2" rx="0.6"/><rect x="0.5" y="8.5" width="4.2" height="2" rx="0.6"/></g></svg>
<div class="b" style="left:492px;top:162px;width:148px;height:20px;background:#4996b2;border-radius:10px;"></div>
<div class="t " style="top:161px;height:21px;line-height:21px;font-size:13px;color:#fff;letter-spacing:-0.408px;left:503.50px;">Wind Kph</div>
<svg class="b" style="left:618px;top:166.3px;" width="13" height="11" viewBox="0 0 13 11"><g fill="none" stroke="#fff" stroke-width="1"><rect x="0.5" y="0.5" width="11" height="2" rx="0.6"/><rect x="0.5" y="4.5" width="7.4" height="2" rx="0.6"/><rect x="0.5" y="8.5" width="4.2" height="2" rx="0.6"/></g></svg>
<div class="b" style="left:364px;top:192px;width:1000px;height:479px;background:#f5f5f5;border:1px solid #bdbdbd;"></div>
<div class="t ttl" style="top:204px;height:28px;line-height:28px;font-size:19.5px;color:#115f26;letter-spacing:1.203px;left:375.70px;">Temperature</div>
<div class="t ttl" style="top:204px;height:28px;line-height:28px;font-size:19.5px;color:#115f26;letter-spacing:1.300px;left:501.20px;">vs</div>
<div class="t ttl" style="top:204px;height:28px;line-height:28px;font-size:19.5px;color:#115f26;letter-spacing:1.257px;left:527.10px;">Wind</div>
<div class="t ttl" style="top:204px;height:28px;line-height:28px;font-size:19.5px;color:#115f26;letter-spacing:0.253px;left:580.10px;">Speed</div>
<div class="t " style="top:210px;height:21px;line-height:21px;font-size:13.5px;color:#115f26;letter-spacing:0.277px;left:641.90px;">Between</div>
<div class="t " style="top:210px;height:21px;line-height:21px;font-size:13.5px;color:#115f26;letter-spacing:0.568px;left:698.80px;">4/22/2016</div>
<div class="t " style="top:210px;height:21px;line-height:21px;font-size:13.5px;color:#115f26;letter-spacing:-0.262px;left:766.00px;">and</div>
<div class="t " style="top:210px;height:21px;line-height:21px;font-size:13.5px;color:#115f26;letter-spacing:0.518px;left:791.40px;">7/20/2016</div>
<div class="b" style="left:454px;top:282px;width:896px;height:379px;background:#f1f1f1;"></div>
<div class="b" style="left:374px;top:281px;width:977px;height:1px;background:#d2d2d2;"></div>
<div class="b" style="left:374px;top:661px;width:977px;height:1px;background:#dadada;"></div>
<div class="t " style="top:241px;height:18px;line-height:18px;font-size:11.5px;color:#3b3b3b;letter-spacing:0.176px;left:802.00px;width:200px;text-align:center;">Temp C</div>
<div class="t " style="top:261px;height:20px;line-height:20px;font-size:12px;color:#3b3b3b;letter-spacing:0.111px;left:380.60px;">Wind Kph</div>
<div class="t " style="top:261px;height:20px;line-height:20px;font-size:12.5px;color:#3b3b3b;letter-spacing:0.243px;left:391.50px;width:200px;text-align:center;">14.9</div>
<div class="t " style="top:261px;height:20px;line-height:20px;font-size:12.5px;color:#3b3b3b;letter-spacing:0.243px;left:466.00px;width:200px;text-align:center;">19.9</div>
<div class="t " style="top:261px;height:20px;line-height:20px;font-size:12.5px;color:#3b3b3b;letter-spacing:0.243px;left:532.10px;width:200px;text-align:center;">12.5</div>
<div class="t " style="top:261px;height:20px;line-height:20px;font-size:12.5px;color:#3b3b3b;letter-spacing:0.243px;left:615.50px;width:200px;text-align:center;">17.4</div>
<div class="t " style="top:261px;height:20px;line-height:20px;font-size:12.5px;color:#3b3b3b;letter-spacing:0.243px;left:690.00px;width:200px;text-align:center;">10.0</div>
<div class="t " style="top:261px;height:20px;line-height:20px;font-size:12.5px;color:#3b3b3b;letter-spacing:0.243px;left:764.50px;width:200px;text-align:center;">22.4</div>
<div class="t " style="top:261px;height:20px;line-height:20px;font-size:12.5px;color:#3b3b3b;letter-spacing:0.261px;left:839.50px;width:200px;text-align:center;">7.5</div>
<div class="t " style="top:261px;height:20px;line-height:20px;font-size:12.5px;color:#3b3b3b;letter-spacing:0.243px;left:914.00px;width:200px;text-align:center;">27.4</div>
<div class="t " style="top:261px;height:20px;line-height:20px;font-size:12.5px;color:#3b3b3b;letter-spacing:0.261px;left:988.50px;width:200px;text-align:center;">5.0</div>
<div class="t " style="top:261px;height:20px;line-height:20px;font-size:12.5px;color:#3b3b3b;letter-spacing:0.243px;left:1063.50px;width:200px;text-align:center;">24.9</div>
<div class="t " style="top:261px;height:20px;line-height:20px;font-size:12.5px;color:#3b3b3b;letter-spacing:0.261px;left:1138.00px;width:200px;text-align:center;">2.5</div>
<div class="t " style="top:261px;height:20px;line-height:20px;font-size:12.5px;color:#3b3b3b;letter-spacing:0.243px;left:1212.50px;width:200px;text-align:center;">29.9</div>
<div class="t " style="top:291px;height:20px;line-height:20px;font-size:12.5px;color:#3b3b3b;letter-spacing:0.243px;left:380.40px;">14.3</div>
<div class="b" style="left:454px;top:282px;width:75px;height:37px;background:rgb(124,77,121);"></div>
<div class="t " style="top:291px;height:20px;line-height:20px;font-size:12.5px;color:#fff;letter-spacing:0.226px;left:391.50px;width:200px;text-align:center;">163,377</div>
<div class="b" style="left:529px;top:282px;width:74px;height:37px;background:rgb(193,160,191);"></div>
<div class="t " style="top:291px;height:20px;line-height:20px;font-size:12.5px;color:#000;letter-spacing:0.229px;left:466.00px;width:200px;text-align:center;">70,002</div>
<div class="b" style="left:603px;top:282px;width:75px;height:37px;background:rgb(178,141,176);"></div>
<div class="t " style="top:291px;height:20px;line-height:20px;font-size:12.5px;color:#000;letter-spacing:0.229px;left:540.50px;width:200px;text-align:center;">88,347</div>
<div class="b" style="left:678px;top:282px;width:75px;height:37px;background:rgb(167,127,166);"></div>
<div class="t " style="top:291px;height:20px;line-height:20px;font-size:12.5px;color:#fff;letter-spacing:0.226px;left:615.50px;width:200px;text-align:center;">101,641</div>
<div class="b" style="left:753px;top:282px;width:74px;height:37px;background:rgb(208,185,208);"></div>
<div class="t " style="top:291px;height:20px;line-height:20px;font-size:12.5px;color:#000;letter-spacing:0.229px;left:690.00px;width:200px;text-align:center;">45,879</div>
<div class="b" style="left:827px;top:282px;width:75px;height:37px;background:rgb(232,221,230);"></div>
<div class="t " style="top:291px;height:20px;line-height:20px;font-size:12.5px;color:#000;letter-spacing:0.229px;left:764.50px;width:200px;text-align:center;">16,061</div>
<div class="b" style="left:902px;top:282px;width:75px;height:37px;background:rgb(224,213,224);"></div>
<div class="t " style="top:291px;height:20px;line-height:20px;font-size:12.5px;color:#000;letter-spacing:0.229px;left:839.50px;width:200px;text-align:center;">23,315</div>
<div class="b" style="left:1051px;top:282px;width:75px;height:37px;background:rgb(237,232,236);"></div>
<div class="t " style="top:291px;height:20px;line-height:20px;font-size:12.5px;color:#000;letter-spacing:0.235px;left:988.50px;width:200px;text-align:center;">7,416</div>
<div class="b" style="left:1126px;top:282px;width:75px;height:37px;background:rgb(237,232,236);"></div>
<div class="t " style="top:291px;height:20px;line-height:20px;font-size:12.5px;color:#000;letter-spacing:0.235px;left:1063.50px;width:200px;text-align:center;">7,304</div>
<div class="b" style="left:1201px;top:282px;width:74px;height:37px;background:rgb(239,237,239);"></div>
<div class="t " style="top:291px;height:20px;line-height:20px;font-size:12.5px;color:#000;letter-spacing:0.235px;left:1138.00px;width:200px;text-align:center;">3,075</div>
<div class="t " style="top:329px;height:20px;line-height:20px;font-size:12.5px;color:#3b3b3b;letter-spacing:0.243px;left:380.40px;">10.7</div>
<div class="b" style="left:454px;top:319px;width:75px;height:38px;background:rgb(127,80,124);"></div>
<div class="t " style="top:329px;height:20px;line-height:20px;font-size:12.5px;color:#fff;letter-spacing:0.226px;left:391.50px;width:200px;text-align:center;">158,782</div>
<div class="b" style="left:529px;top:319px;width:74px;height:38px;background:rgb(192,159,190);"></div>
<div class="t " style="top:329px;height:20px;line-height:20px;font-size:12.5px;color:#000;letter-spacing:0.229px;left:466.00px;width:200px;text-align:center;">71,280</div>
<div class="b" style="left:603px;top:319px;width:75px;height:38px;background:rgb(183,147,181);"></div>
<div class="t " style="top:329px;height:20px;line-height:20px;font-size:12.5px;color:#000;letter-spacing:0.229px;left:540.50px;width:200px;text-align:center;">82,010</div>
<div class="b" style="left:678px;top:319px;width:75px;height:38px;background:rgb(153,107,152);"></div>
<div class="t " style="top:329px;height:20px;line-height:20px;font-size:12.5px;color:#fff;letter-spacing:0.226px;left:615.50px;width:200px;text-align:center;">122,670</div>
<div class="b" style="left:753px;top:319px;width:74px;height:38px;background:rgb(203,177,202);"></div>
<div class="t " style="top:329px;height:20px;line-height:20px;font-size:12.5px;color:#000;letter-spacing:0.229px;left:690.00px;width:200px;text-align:center;">53,315</div>
<div class="b" style="left:827px;top:319px;width:75px;height:38px;background:rgb(226,215,225);"></div>
<div class="t " style="top:329px;height:20px;line-height:20px;font-size:12.5px;color:#000;letter-spacing:0.229px;left:764.50px;width:200px;text-align:center;">21,086</div>
<div class="b" style="left:902px;top:319px;width:75px;height:38px;background:rgb(239,237,239);"></div>
<div class="t " style="top:329px;height:20px;line-height:20px;font-size:12.5px;color:#000;letter-spacing:0.235px;left:839.50px;width:200px;text-align:center;">3,729</div>
<div class="b" style="left:977px;top:319px;width:74px;height:38px;background:rgb(237,233,237);"></div>
<div class="t " style="top:329px;height:20px;line-height:20px;font-size:12.5px;color:#000;letter-spacing:0.235px;left:914.00px;width:200px;text-align:center;">6,504</div>
<div class="b" style="left:1051px;top:319px;width:75px;height:38px;background:rgb(236,231,236);"></div>
<div class="t " style="top:329px;height:20px;line-height:20px;font-size:12.5px;color:#000;letter-spacing:0.235px;left:988.50px;width:200px;text-align:center;">8,354</div>
<div class="b" style="left:1126px;top:319px;width:75px;height:38px;background:rgb(239,238,239);"></div>
<div class="t " style="top:329px;height:20px;line-height:20px;font-size:12.5px;color:#000;letter-spacing:0.235px;left:1063.50px;width:200px;text-align:center;">2,748</div>
<div class="b" style="left:1201px;top:319px;width:74px;height:38px;background:rgb(240,238,240);"></div>
<div class="t " style="top:329px;height:20px;line-height:20px;font-size:12.5px;color:#000;letter-spacing:0.235px;left:1138.00px;width:200px;text-align:center;">1,221</div>
<div class="t " style="top:367px;height:20px;line-height:20px;font-size:12.5px;color:#3b3b3b;letter-spacing:0.243px;left:380.40px;">17.9</div>
<div class="b" style="left:454px;top:357px;width:75px;height:38px;background:rgb(138,90,135);"></div>
<div class="t " style="top:367px;height:20px;line-height:20px;font-size:12.5px;color:#fff;letter-spacing:0.226px;left:391.50px;width:200px;text-align:center;">145,426</div>
<div class="b" style="left:529px;top:357px;width:74px;height:38px;background:rgb(142,95,139);"></div>
<div class="t " style="top:367px;height:20px;line-height:20px;font-size:12.5px;color:#fff;letter-spacing:0.226px;left:466.00px;width:200px;text-align:center;">139,941</div>
<div class="b" style="left:603px;top:357px;width:75px;height:38px;background:rgb(200,172,199);"></div>
<div class="t " style="top:367px;height:20px;line-height:20px;font-size:12.5px;color:#000;letter-spacing:0.229px;left:540.50px;width:200px;text-align:center;">58,159</div>
<div class="b" style="left:678px;top:357px;width:75px;height:38px;background:rgb(132,85,129);"></div>
<div class="t " style="top:367px;height:20px;line-height:20px;font-size:12.5px;color:#fff;letter-spacing:0.226px;left:615.50px;width:200px;text-align:center;">152,559</div>
<div class="b" style="left:753px;top:357px;width:74px;height:38px;background:rgb(213,194,213);"></div>
<div class="t " style="top:367px;height:20px;line-height:20px;font-size:12.5px;color:#000;letter-spacing:0.229px;left:690.00px;width:200px;text-align:center;">38,609</div>
<div class="b" style="left:827px;top:357px;width:75px;height:38px;background:rgb(210,189,210);"></div>
<div class="t " style="top:367px;height:20px;line-height:20px;font-size:12.5px;color:#000;letter-spacing:0.229px;left:764.50px;width:200px;text-align:center;">42,576</div>
<div class="b" style="left:902px;top:357px;width:75px;height:38px;background:rgb(216,199,216);"></div>
<div class="t " style="top:367px;height:20px;line-height:20px;font-size:12.5px;color:#000;letter-spacing:0.229px;left:839.50px;width:200px;text-align:center;">34,664</div>
<div class="b" style="left:977px;top:357px;width:74px;height:38px;background:rgb(236,230,235);"></div>
<div class="t " style="top:367px;height:20px;line-height:20px;font-size:12.5px;color:#000;letter-spacing:0.235px;left:914.00px;width:200px;text-align:center;">8,602</div>
<div class="b" style="left:1051px;top:357px;width:75px;height:38px;background:rgb(236,230,235);"></div>
<div class="t " style="top:367px;height:20px;line-height:20px;font-size:12.5px;color:#000;letter-spacing:0.235px;left:988.50px;width:200px;text-align:center;">9,003</div>
<div class="b" style="left:1126px;top:357px;width:75px;height:38px;background:rgb(211,191,211);"></div>
<div class="t " style="top:367px;height:20px;line-height:20px;font-size:12.5px;color:#000;letter-spacing:0.229px;left:1063.50px;width:200px;text-align:center;">40,921</div>
<div class="b" style="left:1201px;top:357px;width:74px;height:38px;background:rgb(239,237,239);"></div>
<div class="t " style="top:367px;height:20px;line-height:20px;font-size:12.5px;color:#000;letter-spacing:0.235px;left:1138.00px;width:200px;text-align:center;">3,196</div>
<div class="b" style="left:1275px;top:357px;width:75px;height:38px;background:rgb(232,221,230);"></div>
<div class="t " style="top:367px;height:20px;line-height:20px;font-size:12.5px;color:#000;letter-spacing:0.229px;left:1212.50px;width:200px;text-align:center;">15,759</div>
<div class="t " style="top:405px;height:20px;line-height:20px;font-size:12.5px;color:#3b3b3b;letter-spacing:0.261px;left:380.40px;">7.1</div>
<div class="b" style="left:454px;top:395px;width:75px;height:38px;background:rgb(195,162,192);"></div>
<div class="t " style="top:405px;height:20px;line-height:20px;font-size:12.5px;color:#000;letter-spacing:0.229px;left:391.50px;width:200px;text-align:center;">67,895</div>
<div class="b" style="left:529px;top:395px;width:74px;height:38px;background:rgb(212,192,212);"></div>
<div class="t " style="top:405px;height:20px;line-height:20px;font-size:12.5px;color:#000;letter-spacing:0.229px;left:466.00px;width:200px;text-align:center;">40,070</div>
<div class="b" style="left:603px;top:395px;width:75px;height:38px;background:rgb(206,181,205);"></div>
<div class="t " style="top:405px;height:20px;line-height:20px;font-size:12.5px;color:#000;letter-spacing:0.229px;left:540.50px;width:200px;text-align:center;">49,237</div>
<div class="b" style="left:678px;top:395px;width:75px;height:38px;background:rgb(195,162,192);"></div>
<div class="t " style="top:405px;height:20px;line-height:20px;font-size:12.5px;color:#000;letter-spacing:0.229px;left:615.50px;width:200px;text-align:center;">67,650</div>
<div class="b" style="left:753px;top:395px;width:74px;height:38px;background:rgb(210,188,210);"></div>
<div class="t " style="top:405px;height:20px;line-height:20px;font-size:12.5px;color:#000;letter-spacing:0.229px;left:690.00px;width:200px;text-align:center;">43,459</div>
<div class="b" style="left:827px;top:395px;width:75px;height:38px;background:rgb(239,238,239);"></div>
<div class="t " style="top:405px;height:20px;line-height:20px;font-size:12.5px;color:#000;letter-spacing:0.235px;left:764.50px;width:200px;text-align:center;">2,363</div>
<div class="b" style="left:902px;top:395px;width:75px;height:38px;background:rgb(235,229,235);"></div>
<div class="t " style="top:405px;height:20px;line-height:20px;font-size:12.5px;color:#000;letter-spacing:0.235px;left:839.50px;width:200px;text-align:center;">9,686</div>
<div class="b" style="left:977px;top:395px;width:74px;height:38px;background:rgb(238,235,238);"></div>
<div class="t " style="top:405px;height:20px;line-height:20px;font-size:12.5px;color:#000;letter-spacing:0.235px;left:914.00px;width:200px;text-align:center;">5,082</div>
<div class="b" style="left:1051px;top:395px;width:75px;height:38px;background:rgb(240,238,240);"></div>
<div class="t " style="top:405px;height:20px;line-height:20px;font-size:12.5px;color:#000;letter-spacing:0.235px;left:988.50px;width:200px;text-align:center;">1,514</div>
<div class="b" style="left:1201px;top:395px;width:74px;height:38px;background:rgb(239,237,239);"></div>
<div class="t " style="top:405px;height:20px;line-height:20px;font-size:12.5px;color:#000;letter-spacing:0.235px;left:1138.00px;width:200px;text-align:center;">3,393</div>
<div class="t " style="top:443px;height:20px;line-height:20px;font-size:12.5px;color:#3b3b3b;letter-spacing:0.261px;left:380.40px;">3.6</div>
<div class="b" style="left:454px;top:433px;width:75px;height:38px;background:rgb(208,186,208);"></div>
<div class="t " style="top:443px;height:20px;line-height:20px;font-size:12.5px;color:#000;letter-spacing:0.229px;left:391.50px;width:200px;text-align:center;">45,284</div>
<div class="b" style="left:529px;top:433px;width:74px;height:38px;background:rgb(216,198,216);"></div>
<div class="t " style="top:443px;height:20px;line-height:20px;font-size:12.5px;color:#000;letter-spacing:0.229px;left:466.00px;width:200px;text-align:center;">34,946</div>
<div class="b" style="left:603px;top:433px;width:75px;height:38px;background:rgb(217,201,217);"></div>
<div class="t " style="top:443px;height:20px;line-height:20px;font-size:12.5px;color:#000;letter-spacing:0.229px;left:540.50px;width:200px;text-align:center;">33,158</div>
<div class="b" style="left:678px;top:433px;width:75px;height:38px;background:rgb(218,203,218);"></div>
<div class="t " style="top:443px;height:20px;line-height:20px;font-size:12.5px;color:#000;letter-spacing:0.229px;left:615.50px;width:200px;text-align:center;">31,029</div>
<div class="b" style="left:753px;top:433px;width:74px;height:38px;background:rgb(229,218,228);"></div>
<div class="t " style="top:443px;height:20px;line-height:20px;font-size:12.5px;color:#000;letter-spacing:0.229px;left:690.00px;width:200px;text-align:center;">18,285</div>
<div class="b" style="left:827px;top:433px;width:75px;height:38px;background:rgb(236,231,236);"></div>
<div class="t " style="top:443px;height:20px;line-height:20px;font-size:12.5px;color:#000;letter-spacing:0.228px;left:764.50px;width:200px;text-align:center;">8,117</div>
<div class="b" style="left:902px;top:433px;width:75px;height:38px;background:rgb(236,231,236);"></div>
<div class="t " style="top:443px;height:20px;line-height:20px;font-size:12.5px;color:#000;letter-spacing:0.235px;left:839.50px;width:200px;text-align:center;">8,019</div>
<div class="b" style="left:977px;top:433px;width:74px;height:38px;background:rgb(237,233,237);"></div>
<div class="t " style="top:443px;height:20px;line-height:20px;font-size:12.5px;color:#000;letter-spacing:0.235px;left:914.00px;width:200px;text-align:center;">6,290</div>
<div class="b" style="left:1051px;top:433px;width:75px;height:38px;background:rgb(239,238,239);"></div>
<div class="t " style="top:443px;height:20px;line-height:20px;font-size:12.5px;color:#000;letter-spacing:0.235px;left:988.50px;width:200px;text-align:center;">2,448</div>
<div class="b" style="left:1126px;top:433px;width:75px;height:38px;background:rgb(240,238,240);"></div>
<div class="t " style="top:443px;height:20px;line-height:20px;font-size:12.5px;color:#000;letter-spacing:0.235px;left:1063.50px;width:200px;text-align:center;">1,692</div>
<div class="b" style="left:1201px;top:433px;width:74px;height:38px;background:rgb(240,239,240);"></div>
<div class="t " style="top:443px;height:20px;line-height:20px;font-size:12.5px;color:#000;letter-spacing:0.313px;left:1138.00px;width:200px;text-align:center;">756</div>
<div class="t " style="top:481px;height:20px;line-height:20px;font-size:12.5px;color:#3b3b3b;letter-spacing:0.243px;left:380.40px;">21.4</div>
<div class="b" style="left:454px;top:471px;width:75px;height:38px;background:rgb(192,159,190);"></div>
<div class="t " style="top:481px;height:20px;line-height:20px;font-size:12.5px;color:#000;letter-spacing:0.229px;left:391.50px;width:200px;text-align:center;">70,895</div>
<div class="b" style="left:529px;top:471px;width:74px;height:38px;background:rgb(198,168,196);"></div>
<div class="t " style="top:481px;height:20px;line-height:20px;font-size:12.5px;color:#000;letter-spacing:0.229px;left:466.00px;width:200px;text-align:center;">62,102</div>
<div class="b" style="left:603px;top:471px;width:75px;height:38px;background:rgb(224,213,224);"></div>
<div class="t " style="top:481px;height:20px;line-height:20px;font-size:12.5px;color:#000;letter-spacing:0.229px;left:540.50px;width:200px;text-align:center;">22,828</div>
<div class="b" style="left:678px;top:471px;width:75px;height:38px;background:rgb(179,142,177);"></div>
<div class="t " style="top:481px;height:20px;line-height:20px;font-size:12.5px;color:#000;letter-spacing:0.229px;left:615.50px;width:200px;text-align:center;">87,498</div>
<div class="b" style="left:753px;top:471px;width:74px;height:38px;background:rgb(218,203,218);"></div>
<div class="t " style="top:481px;height:20px;line-height:20px;font-size:12.5px;color:#000;letter-spacing:0.229px;left:690.00px;width:200px;text-align:center;">31,285</div>
<div class="b" style="left:827px;top:471px;width:75px;height:38px;background:rgb(230,219,228);"></div>
<div class="t " style="top:481px;height:20px;line-height:20px;font-size:12.5px;color:#000;letter-spacing:0.224px;left:764.50px;width:200px;text-align:center;">18,113</div>
<div class="b" style="left:902px;top:471px;width:75px;height:38px;background:rgb(233,223,231);"></div>
<div class="t " style="top:481px;height:20px;line-height:20px;font-size:12.5px;color:#000;letter-spacing:0.229px;left:839.50px;width:200px;text-align:center;">14,258</div>
<div class="b" style="left:977px;top:471px;width:74px;height:38px;background:rgb(235,229,234);"></div>
<div class="t " style="top:481px;height:20px;line-height:20px;font-size:12.5px;color:#000;letter-spacing:0.235px;left:914.00px;width:200px;text-align:center;">9,994</div>
<div class="b" style="left:1051px;top:471px;width:75px;height:38px;background:rgb(236,230,235);"></div>
<div class="t " style="top:481px;height:20px;line-height:20px;font-size:12.5px;color:#000;letter-spacing:0.235px;left:988.50px;width:200px;text-align:center;">8,638</div>
<div class="b" style="left:1126px;top:471px;width:75px;height:38px;background:rgb(224,213,224);"></div>
<div class="t " style="top:481px;height:20px;line-height:20px;font-size:12.5px;color:#000;letter-spacing:0.229px;left:1063.50px;width:200px;text-align:center;">23,132</div>
<div class="b" style="left:1275px;top:471px;width:75px;height:38px;background:rgb(239,238,239);"></div>
<div class="t " style="top:481px;height:20px;line-height:20px;font-size:12.5px;color:#000;letter-spacing:0.235px;left:1212.50px;width:200px;text-align:center;">2,684</div>
<div class="t " style="top:519px;height:20px;line-height:20px;font-size:12.5px;color:#3b3b3b;letter-spacing:0.243px;left:380.40px;">25.0</div>
<div class="b" style="left:454px;top:509px;width:75px;height:38px;background:rgb(207,183,206);"></div>
<div class="t " style="top:519px;height:20px;line-height:20px;font-size:12.5px;color:#000;letter-spacing:0.229px;left:391.50px;width:200px;text-align:center;">48,088</div>
<div class="b" style="left:529px;top:509px;width:74px;height:38px;background:rgb(212,192,212);"></div>
<div class="t " style="top:519px;height:20px;line-height:20px;font-size:12.5px;color:#000;letter-spacing:0.229px;left:466.00px;width:200px;text-align:center;">39,978</div>
<div class="b" style="left:603px;top:509px;width:75px;height:38px;background:rgb(235,229,235);"></div>
<div class="t " style="top:519px;height:20px;line-height:20px;font-size:12.5px;color:#000;letter-spacing:0.235px;left:540.50px;width:200px;text-align:center;">9,575</div>
<div class="b" style="left:678px;top:509px;width:75px;height:38px;background:rgb(205,180,204);"></div>
<div class="t " style="top:519px;height:20px;line-height:20px;font-size:12.5px;color:#000;letter-spacing:0.229px;left:615.50px;width:200px;text-align:center;">50,660</div>
<div class="b" style="left:753px;top:509px;width:74px;height:38px;background:rgb(229,218,228);"></div>
<div class="t " style="top:519px;height:20px;line-height:20px;font-size:12.5px;color:#000;letter-spacing:0.229px;left:690.00px;width:200px;text-align:center;">18,465</div>
<div class="b" style="left:827px;top:509px;width:75px;height:38px;background:rgb(221,207,221);"></div>
<div class="t " style="top:519px;height:20px;line-height:20px;font-size:12.5px;color:#000;letter-spacing:0.229px;left:764.50px;width:200px;text-align:center;">27,892</div>
<div class="b" style="left:902px;top:509px;width:75px;height:38px;background:rgb(235,228,234);"></div>
<div class="t " style="top:519px;height:20px;line-height:20px;font-size:12.5px;color:#000;letter-spacing:0.229px;left:839.50px;width:200px;text-align:center;">10,456</div>
<div class="b" style="left:977px;top:509px;width:74px;height:38px;background:rgb(239,237,239);"></div>
<div class="t " style="top:519px;height:20px;line-height:20px;font-size:12.5px;color:#000;letter-spacing:0.235px;left:914.00px;width:200px;text-align:center;">3,175</div>
<div class="b" style="left:1051px;top:509px;width:75px;height:38px;background:rgb(239,236,239);"></div>
<div class="t " style="top:519px;height:20px;line-height:20px;font-size:12.5px;color:#000;letter-spacing:0.235px;left:988.50px;width:200px;text-align:center;">4,230</div>
<div class="b" style="left:1126px;top:509px;width:75px;height:38px;background:rgb(235,228,234);"></div>
<div class="t " style="top:519px;height:20px;line-height:20px;font-size:12.5px;color:#000;letter-spacing:0.229px;left:1063.50px;width:200px;text-align:center;">10,109</div>
<div class="b" style="left:1275px;top:509px;width:75px;height:38px;background:rgb(238,235,238);"></div>
<div class="t " style="top:519px;height:20px;line-height:20px;font-size:12.5px;color:#000;letter-spacing:0.235px;left:1212.50px;width:200px;text-align:center;">5,046</div>
<div class="t " style="top:557px;height:20px;line-height:20px;font-size:12.5px;color:#3b3b3b;letter-spacing:0.261px;left:380.40px;">0.0</div>
<div class="b" style="left:454px;top:547px;width:75px;height:38px;background:rgb(237,233,237);"></div>
<div class="t " style="top:557px;height:20px;line-height:20px;font-size:12.5px;color:#000;letter-spacing:0.235px;left:391.50px;width:200px;text-align:center;">6,415</div>
<div class="b" style="left:603px;top:547px;width:75px;height:38px;background:rgb(239,238,239);"></div>
<div class="t " style="top:557px;height:20px;line-height:20px;font-size:12.5px;color:#000;letter-spacing:0.235px;left:540.50px;width:200px;text-align:center;">2,298</div>
<div class="b" style="left:678px;top:547px;width:75px;height:38px;background:rgb(238,235,238);"></div>
<div class="t " style="top:557px;height:20px;line-height:20px;font-size:12.5px;color:#000;letter-spacing:0.235px;left:615.50px;width:200px;text-align:center;">4,858</div>
<div class="b" style="left:753px;top:547px;width:74px;height:38px;background:rgb(239,238,239);"></div>
<div class="t " style="top:557px;height:20px;line-height:20px;font-size:12.5px;color:#000;letter-spacing:0.235px;left:690.00px;width:200px;text-align:center;">2,536</div>
<div class="b" style="left:827px;top:547px;width:75px;height:38px;background:rgb(239,237,239);"></div>
<div class="t " style="top:557px;height:20px;line-height:20px;font-size:12.5px;color:#000;letter-spacing:0.235px;left:764.50px;width:200px;text-align:center;">4,007</div>
<div class="b" style="left:902px;top:547px;width:75px;height:38px;background:rgb(240,238,240);"></div>
<div class="t " style="top:557px;height:20px;line-height:20px;font-size:12.5px;color:#000;letter-spacing:0.235px;left:839.50px;width:200px;text-align:center;">1,075</div>
<div class="b" style="left:977px;top:547px;width:74px;height:38px;background:rgb(239,238,239);"></div>
<div class="t " style="top:557px;height:20px;line-height:20px;font-size:12.5px;color:#000;letter-spacing:0.235px;left:914.00px;width:200px;text-align:center;">2,036</div>
<div class="b" style="left:1051px;top:547px;width:75px;height:38px;background:rgb(240,239,240);"></div>
<div class="t " style="top:557px;height:20px;line-height:20px;font-size:12.5px;color:#000;letter-spacing:0.417px;left:988.50px;width:200px;text-align:center;">91</div>
<div class="t " style="top:595px;height:20px;line-height:20px;font-size:12.5px;color:#3b3b3b;letter-spacing:0.243px;left:380.40px;">28.6</div>
<div class="b" style="left:454px;top:585px;width:75px;height:38px;background:rgb(239,237,239);"></div>
<div class="t " style="top:595px;height:20px;line-height:20px;font-size:12.5px;color:#000;letter-spacing:0.235px;left:391.50px;width:200px;text-align:center;">3,620</div>
<div class="b" style="left:529px;top:585px;width:74px;height:38px;background:rgb(233,222,231);"></div>
<div class="t " style="top:595px;height:20px;line-height:20px;font-size:12.5px;color:#000;letter-spacing:0.229px;left:466.00px;width:200px;text-align:center;">14,984</div>
<div class="b" style="left:603px;top:585px;width:75px;height:38px;background:rgb(240,238,240);"></div>
<div class="t " style="top:595px;height:20px;line-height:20px;font-size:12.5px;color:#000;letter-spacing:0.235px;left:540.50px;width:200px;text-align:center;">1,283</div>
<div class="b" style="left:678px;top:585px;width:75px;height:38px;background:rgb(235,227,234);"></div>
<div class="t " style="top:595px;height:20px;line-height:20px;font-size:12.5px;color:#000;letter-spacing:0.229px;left:615.50px;width:200px;text-align:center;">10,881</div>
<div class="b" style="left:753px;top:585px;width:74px;height:38px;background:rgb(239,237,239);"></div>
<div class="t " style="top:595px;height:20px;line-height:20px;font-size:12.5px;color:#000;letter-spacing:0.235px;left:690.00px;width:200px;text-align:center;">2,910</div>
<div class="b" style="left:827px;top:585px;width:75px;height:38px;background:rgb(236,230,235);"></div>
<div class="t " style="top:595px;height:20px;line-height:20px;font-size:12.5px;color:#000;letter-spacing:0.235px;left:764.50px;width:200px;text-align:center;">8,907</div>
<div class="b" style="left:902px;top:585px;width:75px;height:38px;background:rgb(239,237,239);"></div>
<div class="t " style="top:595px;height:20px;line-height:20px;font-size:12.5px;color:#000;letter-spacing:0.228px;left:839.50px;width:200px;text-align:center;">4,011</div>
<div class="t " style="top:633px;height:20px;line-height:20px;font-size:12.5px;color:#3b3b3b;letter-spacing:0.243px;left:380.40px;">32.1</div>
<div class="b" style="left:529px;top:623px;width:74px;height:38px;background:rgb(237,232,237);"></div>
<div class="t " style="top:633px;height:20px;line-height:20px;font-size:12.5px;color:#000;letter-spacing:0.235px;left:466.00px;width:200px;text-align:center;">7,083</div>
<div class="b" style="left:753px;top:623px;width:74px;height:38px;background:rgb(240,238,240);"></div>
<div class="t " style="top:633px;height:20px;line-height:20px;font-size:12.5px;color:#000;letter-spacing:0.235px;left:690.00px;width:200px;text-align:center;">1,051</div>
<div class="b" style="left:827px;top:623px;width:75px;height:38px;background:rgb(239,236,239);"></div>
<div class="t " style="top:633px;height:20px;line-height:20px;font-size:12.5px;color:#000;letter-spacing:0.235px;left:764.50px;width:200px;text-align:center;">4,340</div>
<div class="b" style="left:902px;top:623px;width:75px;height:38px;background:rgb(240,238,240);"></div>
<div class="t " style="top:633px;height:20px;line-height:20px;font-size:12.5px;color:#000;letter-spacing:0.235px;left:839.50px;width:200px;text-align:center;">1,169</div>
<svg class="b" style="left:665px;top:265px;" width="11" height="10" viewBox="0 0 11 10"><g fill="#444" stroke="#fff" stroke-width="1.6" paint-order="stroke"><rect x="0" y="0" width="10" height="2"/><rect x="0" y="4" width="6" height="2"/><rect x="0" y="8" width="3" height="2"/></g></svg>
<svg class="b" style="left:441px;top:448px;" width="11" height="10" viewBox="0 0 11 10"><g fill="#111" stroke="#fff" stroke-width="1.6" paint-order="stroke"><rect x="0" y="0" width="2" height="10"/><rect x="4" y="3.5" width="2" height="6.5"/><rect x="8" y="7" width="2" height="3"/></g></svg>
<svg class="b" style="left:441px;top:486px;" width="11" height="10" viewBox="0 0 11 10"><g fill="#555" stroke="#fff" stroke-width="1.6" paint-order="stroke"><rect x="0" y="0" width="2" height="10"/><rect x="4" y="3.5" width="2" height="6.5"/><rect x="8" y="7" width="2" height="3"/></g><path d="M5.5 1.3h5M8.5 -0.8l2.2 2.1-2.2 2.1" fill="none" stroke="#555" stroke-width="1"/></svg>
<svg class="b" style="left:374px;top:281px;" width="21" height="21" viewBox="0 0 21 21"><defs><pattern id="hp" width="2" height="4" patternUnits="userSpaceOnUse"><rect width="2" height="4" fill="#d7e4f0"/><rect x="0.9" width="1.1" height="4" fill="#a8c4de"/></pattern></defs><path d="M0 0h20L0 20z" fill="url(#hp)"/><path d="M0 1h19M1 0v19" stroke="#a8c4de" stroke-width="2" fill="none"/><path d="M20 0L0 20" stroke="#a8c4de" stroke-width="1.4" fill="none"/></svg>
<svg class="b" style="left:448px;top:282px;" width="6" height="6" viewBox="0 0 6 6"><path d="M0 0.7h5.3v5.3" fill="none" stroke="#a8c4de" stroke-width="2.1"/></svg>
<svg class="b" style="left:374px;top:654px;" width="6" height="6" viewBox="0 0 6 6"><path d="M0.7 0v5.3h5.3" fill="none" stroke="#a8c4de" stroke-width="2.1"/></svg>
<svg class="b" style="left:448px;top:654px;" width="6" height="6" viewBox="0 0 6 6"><path d="M5.3 0v5.3H0" fill="none" stroke="#a8c4de" stroke-width="2.1"/></svg>
<div class="b" style="left:0px;top:677px;width:1353px;height:24px;background:#e6e6e6;border-top:1px solid #d4d4d4;"></div>
<div class="b" style="left:130px;top:678px;width:1px;height:23px;background:#d0d0d0;"></div>
<div class="b" style="left:236px;top:678px;width:1px;height:23px;background:#d0d0d0;"></div>
<div class="b" style="left:313px;top:678px;width:1px;height:23px;background:#d0d0d0;"></div>
<div class="b" style="left:381px;top:678px;width:1px;height:23px;background:#d0d0d0;"></div>
<div class="b" style="left:443px;top:678px;width:1px;height:23px;background:#d0d0d0;"></div>
<div class="b" style="left:484px;top:678px;width:1px;height:23px;background:#d0d0d0;"></div>
<div class="b" style="left:588px;top:678px;width:1px;height:23px;background:#d0d0d0;"></div>
<div class="b" style="left:620px;top:678px;width:1px;height:23px;background:#d0d0d0;"></div>
<div class="b" style="left:652px;top:678px;width:1px;height:23px;background:#d0d0d0;"></div>
<div class="b" style="left:684px;top:678px;width:1px;height:23px;background:#d0d0d0;"></div>
<div class="b" style="left:314px;top:678px;width:67px;height:23px;background:#f7f7f7;"></div>
<svg class="b" style="left:10px;top:685.7px;" width="8" height="11" viewBox="0 0 8 11"><path d="M0.7 2.2c0-0.9 1.4-1.5 3.3-1.5s3.3 0.6 3.3 1.5v6.6c0 0.9-1.4 1.5-3.3 1.5s-3.3-0.6-3.3-1.5zM0.7 2.4c0 0.9 1.4 1.4 3.3 1.4s3.3-0.5 3.3-1.4" fill="none" stroke="#444" stroke-width="1.1"/></svg>
<div class="t " style="top:682px;height:21px;line-height:21px;font-size:13px;color:#666;letter-spacing:-0.426px;left:24.00px;">Data Source</div>
<div class="t " style="top:682px;height:21px;line-height:21px;font-size:13px;color:#666;letter-spacing:-0.384px;left:137.00px;">Moving Average</div>
<div class="t " style="top:682px;height:21px;line-height:21px;font-size:13px;color:#666;letter-spacing:-0.331px;left:242.00px;">Total Rides</div>
<div class="t sb2" style="top:681px;height:21px;line-height:21px;font-size:13.5px;color:#3b3b3b;letter-spacing:-0.432px;left:319.30px;">Heat Map</div>
<div class="t " style="top:682px;height:21px;line-height:21px;font-size:13px;color:#666;letter-spacing:-0.399px;left:387.00px;">Weather</div>
<div class="t " style="top:682px;height:21px;line-height:21px;font-size:13px;color:#666;letter-spacing:-0.226px;left:449.00px;">Hour</div>
<svg class="b" style="left:492px;top:686px;" width="11" height="11" viewBox="0 0 11 11"><path d="M0.6 0.6h9.4v9.4H0.6zM5.3 0.6v9.4M0.6 5.3h9.4" fill="none" stroke="#444" stroke-width="1.1"/></svg>
<div class="t " style="top:682px;height:21px;line-height:21px;font-size:13px;color:#666;letter-spacing:-0.444px;left:508.00px;">Dashboard 1</div>
<svg class="b" style="left:598px;top:686px;" width="15" height="15" viewBox="0 0 15 15"><path d="M10.4 6V0.6H0.6v9.8H6" fill="none" stroke="#444" stroke-width="1.1"/><path d="M3 8V5.5M5.2 8V3M7.4 8V4.5" stroke="#444" stroke-width="1.1"/><path d="M11.3 7.2v7.6M7.5 11h7.6" stroke="#222" stroke-width="1.7"/></svg>
<svg class="b" style="left:630px;top:686px;" width="15" height="15" viewBox="0 0 15 15"><path d="M10.4 6V0.6H0.6v9.8H6M5.5 0.6v9.8M0.6 5.5h9.8" fill="none" stroke="#444" stroke-width="1.1"/><path d="M11.3 7.2v7.6M7.5 11h7.6" stroke="#222" stroke-width="1.7"/></svg>
<svg class="b" style="left:661.5px;top:686px;" width="15" height="15" viewBox="0 0 15 15"><path d="M9.4 6V0.8L5 2.2 0.6 0.8v9L5 11.2M5 2.2v9" fill="none" stroke="#444" stroke-width="1.1"/><path d="M11.3 7.2v7.6M7.5 11h7.6" stroke="#222" stroke-width="1.7"/></svg>
</body></html>
